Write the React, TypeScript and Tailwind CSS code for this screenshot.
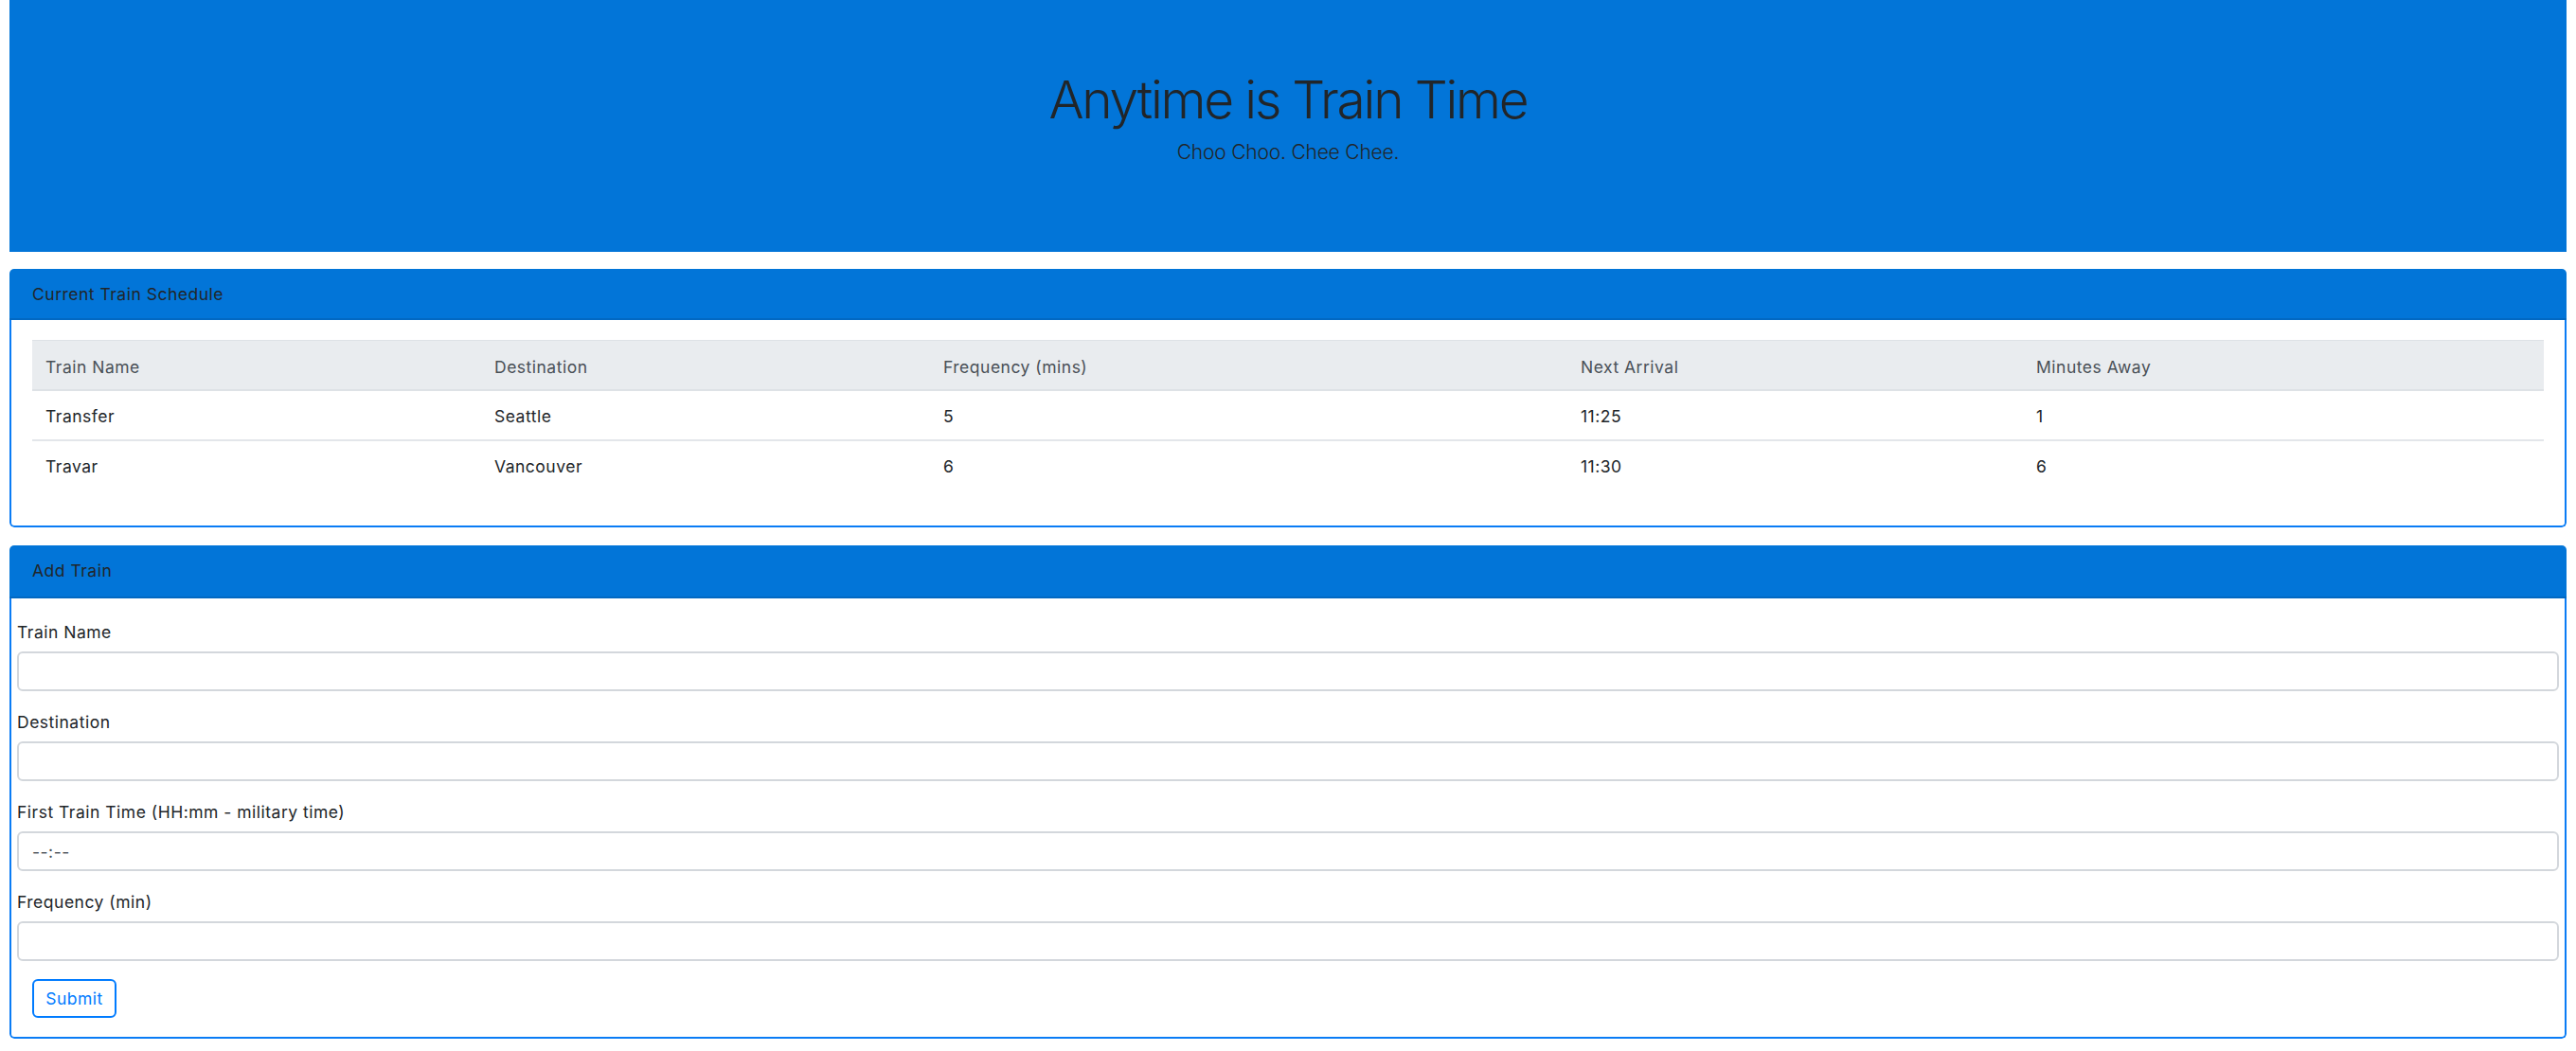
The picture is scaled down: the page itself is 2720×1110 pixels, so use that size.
import React from "react";

const cols = [
  { label: "Train Name", w: "w-[474px]" },
  { label: "Destination", w: "w-[474px]" },
  { label: "Frequency (mins)", w: "w-[673px]" },
  { label: "Next Arrival", w: "w-[481px]" },
  { label: "Minutes Away", w: "w-[550px]" },
];

const rows = [
  ["Transfer", "Seattle", "5", "11:25", "1"],
  ["Travar", "Vancouver", "6", "11:30", "6"],
];

function Field({ label, placeholder }: { label: string; placeholder?: string }) {
  return (
    <div className="mb-[20px]">
      <label className="block text-[17.5px] tracking-[0.5px] leading-[26px] text-[#212529] mb-[7px]">{label}</label>
      <input
        type="text"
        placeholder={placeholder}
        className="block w-full h-[42px] border-2 border-[#d3d7dc] rounded-[6px] px-[14px] text-[17.5px] tracking-[0.5px] text-[#495057] placeholder:text-[#495057] bg-white outline-none"
      />
    </div>
  );
}

export default function App() {
  return (
    <div
      className="w-full min-h-[1110px] bg-white px-[10px] pb-[13px]"
      style={{ fontFamily: "Inter, 'Liberation Sans', sans-serif" }}
    >
      <div className="h-[266px] bg-[#0275d8] flex flex-col items-center pt-[70px] text-[#212529]">
        <h1 className="text-[55px] leading-[70px] font-light tracking-[-2.2px]">Anytime is Train Time</h1>
        <p className="mt-[6px] text-[21px] leading-[30px] font-light tracking-[-0.2px]">Choo Choo. Chee Chee.</p>
      </div>

      <div className="mt-[18px] rounded-[5px] overflow-hidden">
        <div className="bg-[#0275d8] border-b-2 border-[#0268c2] px-[24px] pt-[17px] pb-[15px] text-[17.5px] tracking-[0.5px] leading-[20px] text-[#212529]">
          Current Train Schedule
        </div>
        <div className="border-x-2 border-b-2 border-[#0a7cf5] rounded-b-[5px] pt-[21px] pb-[38px] px-[22px]">
          <table className="w-full table-fixed border-collapse text-[17.5px] tracking-[0.5px] leading-[25px]">
            <thead>
              <tr className="bg-[#e9ecef]">
                {cols.map((c) => (
                  <th
                    key={c.label}
                    className={`${c.w} text-left font-normal text-[#495057] pl-[14px] pt-[15px] pb-[11px] border-t border-b-2 border-[#dee2e6]`}
                  >
                    {c.label}
                  </th>
                ))}
              </tr>
            </thead>
            <tbody>
              {rows.map((r, i) => (
                <tr key={i} className={i > 0 ? "border-t-2 border-[#e3e6ea]" : ""}>
                  {r.map((cell, j) => (
                    <td key={j} className="pl-[14px] pt-[14px] pb-[12px] text-[#212529]">
                      {cell}
                    </td>
                  ))}
                </tr>
              ))}
            </tbody>
          </table>
        </div>
      </div>

      <div className="mt-[19px] rounded-[5px] overflow-hidden">
        <div className="bg-[#0275d8] border-b-2 border-[#0268c2] px-[24px] pt-[17px] pb-[17px] text-[17.5px] tracking-[0.5px] leading-[20px] text-[#212529]">
          Add Train
        </div>
        <div className="border-x-2 border-b-2 border-[#0a7cf5] rounded-b-[5px] px-[6px] pt-[23px] pb-[20px]">
          <Field label="Train Name" />
          <Field label="Destination" />
          <Field label="First Train Time (HH:mm - military time)" placeholder="--:--" />
          <Field label="Frequency (min)" />
          <button
            type="button"
            className="-mt-[1px] ml-[16px] w-[89px] h-[41px] border-2 border-[#007bff] rounded-[6px] text-[#007bff] text-[17.5px] tracking-[0.5px] leading-[20px] bg-white"
          >
            Submit
          </button>
        </div>
      </div>
    </div>
  );
}
